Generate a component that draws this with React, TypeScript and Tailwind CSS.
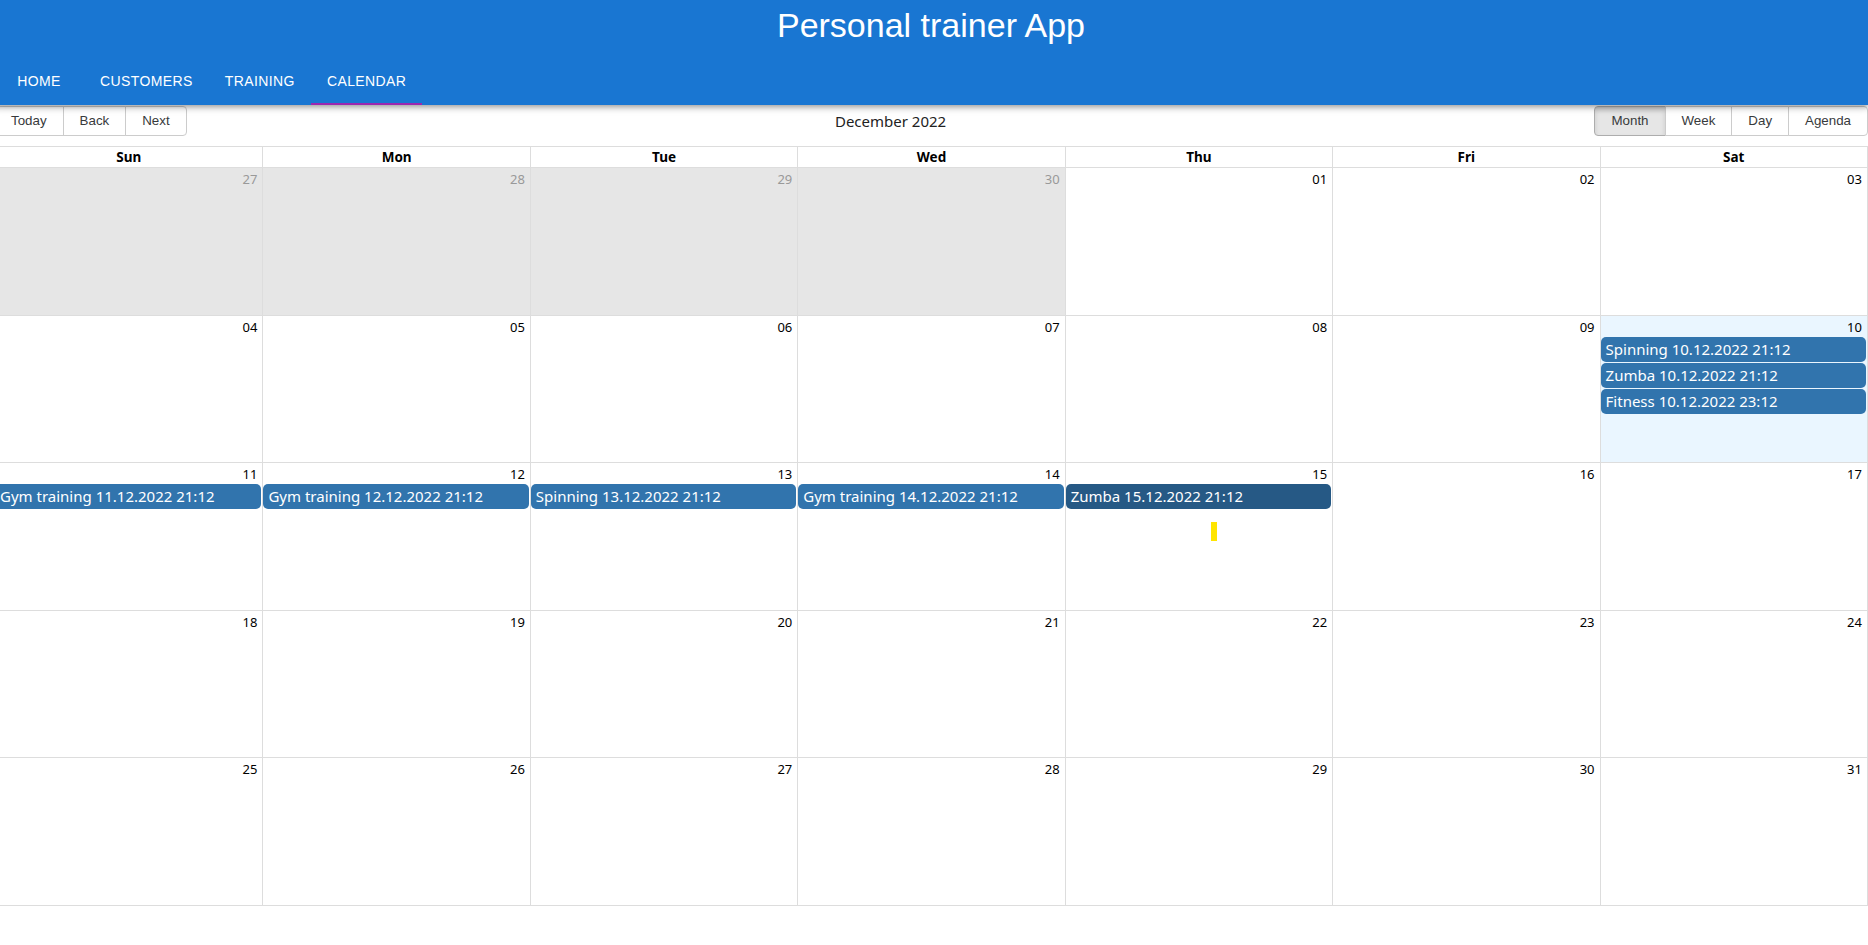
import React from 'react';

type CalEvent = { title: string; selected?: boolean };
type Day = { label: string; off?: boolean; today?: boolean; events?: CalEvent[]; marker?: boolean };

const weekdays = ['Sun', 'Mon', 'Tue', 'Wed', 'Thu', 'Fri', 'Sat'];

const weeks: Day[][] = [
  [
    { label: '27', off: true },
    { label: '28', off: true },
    { label: '29', off: true },
    { label: '30', off: true },
    { label: '01' },
    { label: '02' },
    { label: '03' },
  ],
  [
    { label: '04' },
    { label: '05' },
    { label: '06' },
    { label: '07' },
    { label: '08' },
    { label: '09' },
    {
      label: '10',
      today: true,
      events: [
        { title: 'Spinning 10.12.2022 21:12' },
        { title: 'Zumba 10.12.2022 21:12' },
        { title: 'Fitness 10.12.2022 23:12' },
      ],
    },
  ],
  [
    { label: '11', events: [{ title: 'Gym training 11.12.2022 21:12' }] },
    { label: '12', events: [{ title: 'Gym training 12.12.2022 21:12' }] },
    { label: '13', events: [{ title: 'Spinning 13.12.2022 21:12' }] },
    { label: '14', events: [{ title: 'Gym training 14.12.2022 21:12' }] },
    { label: '15', events: [{ title: 'Zumba 15.12.2022 21:12', selected: true }], marker: true },
    { label: '16' },
    { label: '17' },
  ],
  [
    { label: '18' },
    { label: '19' },
    { label: '20' },
    { label: '21' },
    { label: '22' },
    { label: '23' },
    { label: '24' },
  ],
  [
    { label: '25' },
    { label: '26' },
    { label: '27' },
    { label: '28' },
    { label: '29' },
    { label: '30' },
    { label: '31' },
  ],
];

const tabs = ['Home', 'Customers', 'Training', 'Calendar'];

const ToolbarButton: React.FC<{ label: string; first?: boolean; last?: boolean; active?: boolean }> = ({
  label,
  first,
  last,
  active,
}) => (
  <button
    className={
      'h-[30px] border px-4 font-[Liberation_Sans,Arial,sans-serif] text-[13.333px] text-[#373a3c] ' +
      (first ? 'rounded-l-[4px] ' : '-ml-px ') +
      (last ? 'rounded-r-[4px] ' : '') +
      (active
        ? 'border-[#adadad] bg-[#e6e6e6] shadow-[inset_0_3px_5px_rgba(0,0,0,0.125)]'
        : 'border-[#ccc] bg-white')
    }
  >
    {label}
  </button>
);

const App: React.FC = () => {
  return (
    <div className="w-full overflow-hidden bg-white">
      <div className="-ml-[6px] w-[1874px]">
        {/* App bar */}
        <header className="relative z-10 bg-[#1976d2] text-white shadow-[0px_2px_4px_-1px_rgba(0,0,0,0.2),0px_4px_5px_0px_rgba(0,0,0,0.14),0px_1px_10px_0px_rgba(0,0,0,0.12)]">
          <div className="h-[57px] pt-[4px] text-center font-['Liberation_Sans',Arial,sans-serif] text-[34px] leading-[42px]">
            Personal trainer App
          </div>
          <nav className="flex h-[48px] font-['Liberation_Sans',Arial,sans-serif]">
            {tabs.map((t) => (
              <div
                key={t}
                className="relative flex min-w-[90px] items-center justify-center px-4 text-[14px] font-medium uppercase tracking-[0.4px]"
              >
                {t}
                {t === 'Calendar' && <span className="absolute bottom-0 left-0 right-0 h-[2px] bg-[#9c27b0]" />}
              </div>
            ))}
          </nav>
        </header>

        {/* Calendar */}
        <div className="flex h-[801px] flex-col pt-px font-['Noto_Sans',sans-serif] text-black">
          <div className="mb-[10px] flex h-[30px] items-center">
            <div className="flex">
              <ToolbarButton label="Today" first />
              <ToolbarButton label="Back" />
              <ToolbarButton label="Next" last />
            </div>
            <span className="flex-1 px-[10px] text-center text-[15px] text-[#222]">December 2022</span>
            <div className="flex">
              <ToolbarButton label="Month" first active />
              <ToolbarButton label="Week" />
              <ToolbarButton label="Day" />
              <ToolbarButton label="Agenda" last />
            </div>
          </div>

          <div className="flex min-h-0 flex-1 flex-col border border-[#ddd]">
            <div className="grid grid-cols-7 border-b border-[#ddd]">
              {weekdays.map((d, i) => (
                <div
                  key={d}
                  className={
                    'h-[20px] px-[3px] text-center text-[13.5px] font-bold leading-[20px] ' +
                    (i > 0 ? 'border-l border-[#ddd]' : '')
                  }
                >
                  {d}
                </div>
              ))}
            </div>

            {weeks.map((week, wi) => (
              <div
                key={wi}
                className={'grid min-h-0 flex-1 grid-cols-7 ' + (wi > 0 ? 'border-t border-[#ddd]' : '')}
              >
                {week.map((day, di) => (
                  <div
                    key={di}
                    className={
                      'relative flex min-w-0 flex-col ' +
                      (di > 0 ? 'border-l border-[#ddd] ' : '') +
                      (day.off ? 'bg-[#e6e6e6] ' : day.today ? 'bg-[#eaf6ff] ' : 'bg-white ')
                    }
                  >
                    <div
                      className={
                        'h-[21px] pr-[5px] text-right text-[13px] leading-[23px] ' +
                        (day.off ? 'text-[#999]' : 'text-black')
                      }
                    >
                      {day.label}
                    </div>
                    {day.events?.map((ev) => (
                      <div key={ev.title} className="pb-px pr-px">
                        <div
                          className={
                            'truncate rounded-[5px] px-[5px] py-[2px] text-[15px] leading-[21px] text-white ' +
                            (ev.selected ? 'bg-[#265985]' : 'bg-[#3174ad]')
                          }
                        >
                          {ev.title}
                        </div>
                      </div>
                    ))}
                    {day.marker && (
                      <span className="absolute left-[145px] top-[59px] h-[19px] w-[6px] bg-[#ffe500]" />
                    )}
                  </div>
                ))}
              </div>
            ))}
          </div>
        </div>
      </div>
    </div>
  );
};

export default App;
